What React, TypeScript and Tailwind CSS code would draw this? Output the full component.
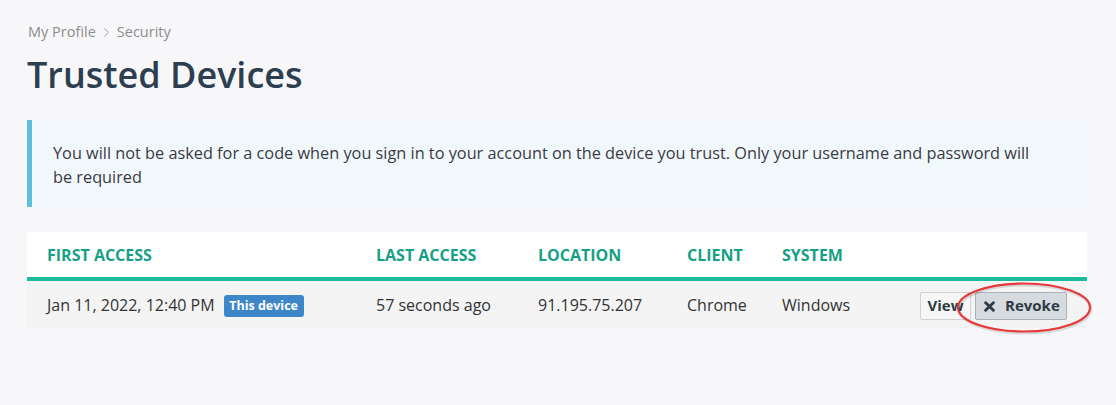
import { ChevronRight } from 'lucide-react';

const devices = [
  {
    id: 1,
    firstAccess: 'Jan 11, 2022, 12:40 PM',
    current: true,
    lastAccess: '57 seconds ago',
    location: '91.195.75.207',
    client: 'Chrome',
    system: 'Windows',
  },
];

const columns = [
  { label: 'First Access', w: 'w-[329px]' },
  { label: 'Last Access', w: 'w-[162px]' },
  { label: 'Location', w: 'w-[149px]' },
  { label: 'Client', w: 'w-[95px]' },
  { label: 'System', w: 'w-[138px]' },
];

function RevokeHighlight() {
  // annotation ring drawn over the revoke button in the screenshot
  return (
    <svg
      className="pointer-events-none absolute -left-[19px] -top-[11px]"
      width="138"
      height="56"
      viewBox="0 0 138 56"
      fill="none"
    >
      <ellipse cx="68" cy="26.5" rx="66" ry="24" stroke="rgba(0,0,0,0.12)" strokeWidth="3" transform="translate(1 1.5)" />
      <ellipse cx="68" cy="26.5" rx="66" ry="24" stroke="#e5393b" strokeWidth="2.2" />
    </svg>
  );
}

export default function App() {
  return (
    <div className="min-h-[405px] bg-[#f7f7f9] px-[27px] pt-[22px] font-['Open_Sans',sans-serif] text-[#333]">
      {/* Breadcrumb */}
      <nav className="flex h-5 items-center pl-px text-[14.5px] text-[#8c8c8c]">
        <span>My Profile</span>
        <ChevronRight size={15} strokeWidth={1.5} className="mx-[3px] mt-px text-[#9a9a9a]" />
        <span>Security</span>
      </nav>

      <h1 className="mt-[11px] text-[36px] font-semibold leading-[44px] text-[#2c3e50]">Trusted Devices</h1>

      {/* Notice */}
      <div className="mt-[23px] border-l-[5px] border-[#5bc0de] bg-[#f1f8fb] pb-[18px] pl-[21px] pt-[21px]">
        <p className="max-w-[986px] text-[16.3px] leading-6 text-[#3a3a45]">
          You will not be asked for a code when you sign in to your account on the device you trust. Only your username
          and password will be required
        </p>
      </div>

      {/* Devices table */}
      <table className="mt-[25px] w-[1060px] table-fixed border-collapse">
        <thead>
          <tr className="bg-white">
            {columns.map((c) => (
              <th
                key={c.label}
                className={`${c.w} h-[47px] border-b-4 border-[#1abc9c] pl-5 text-left text-[16px] font-bold uppercase text-[#16a085]`}
              >
                {c.label}
              </th>
            ))}
            <th className="h-[47px] w-[187px] border-b-4 border-[#1abc9c]" />
          </tr>
        </thead>
        <tbody>
          {devices.map((d) => (
            <tr key={d.id} className="bg-[#f4f4f5] text-[16px]">
              <td className="h-[49px] pl-5">
                <span className="inline-flex items-center">
                  {d.firstAccess}
                  {d.current && (
                    <span className="ml-[9px] mt-[3px] inline-flex h-[22px] w-[80px] items-center justify-center rounded-[3px] bg-[#3d87c9] text-[12.5px] font-bold text-white">
                      This device
                    </span>
                  )}
                </span>
              </td>
              <td className="pl-5">{d.lastAccess}</td>
              <td className="pl-5">{d.location}</td>
              <td className="pl-5">{d.client}</td>
              <td className="pl-5">{d.system}</td>
              <td className="pr-5">
                <div className="flex justify-end gap-1 pt-[2px]">
                  <button
                    type="button"
                    className="h-7 w-[51px] rounded-[2px] border border-[#cfd3d6] bg-[#f6f6f6] text-[15px] font-bold text-[#2e3a44]"
                  >
                    View
                  </button>
                  <div className="relative">
                    <button
                      type="button"
                      className="flex h-7 w-[92px] items-center gap-[10px] rounded-[2px] border border-[#a8b2b8] bg-[#d5dbde] pl-[8px] text-[15px] font-bold text-[#2e3a44]"
                    >
                      <svg width="11" height="11" viewBox="0 0 10 10" className="mt-px">
                        <path d="M1.5 1.5l7 7M8.5 1.5l-7 7" stroke="#2e3a44" strokeWidth="2.6" strokeLinecap="round" />
                      </svg>
                      Revoke
                    </button>
                    <RevokeHighlight />
                  </div>
                </div>
              </td>
            </tr>
          ))}
        </tbody>
      </table>
    </div>
  );
}
